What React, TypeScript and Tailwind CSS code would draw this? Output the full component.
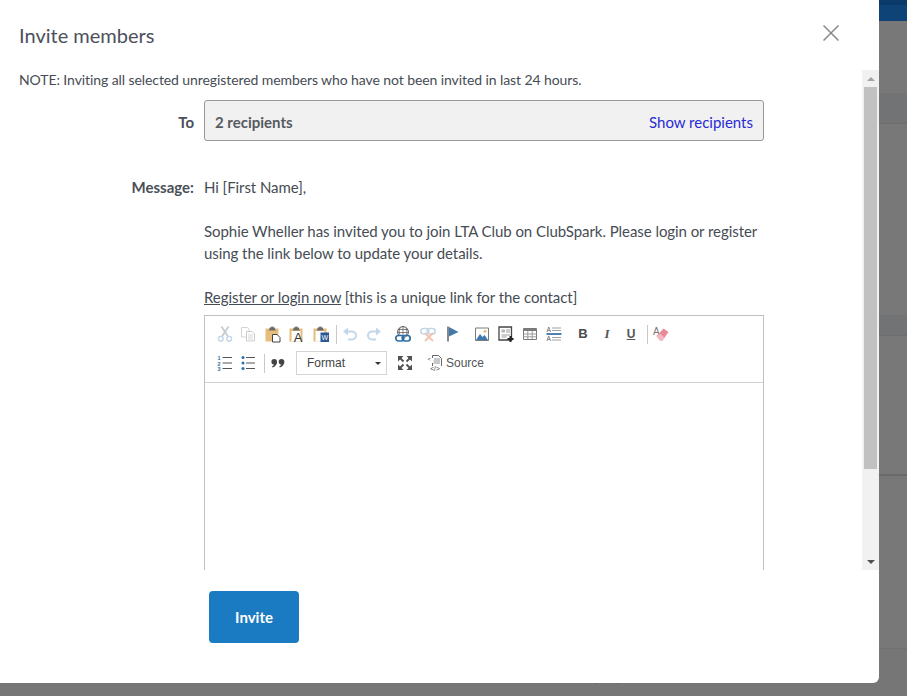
import type { ReactNode } from 'react';

const Tool = ({ className = '', children }: { className?: string; children: ReactNode }) => (
  <svg viewBox="0 0 16 16" className={`w-4 h-4 shrink-0 overflow-visible ${className}`}>
    {children}
  </svg>
);

const Sep = ({ className = '' }: { className?: string }) => (
  <div className={`w-px h-[19px] bg-[#c8c8c8] shrink-0 ${className}`} />
);

const Clipboard = () => (
  <>
    <path d="M0.500 2.500h13v13h-13z" fill="#e6bd7b" />
    <path d="M4.500 3V1.500H6L6.500 .5h1.500l.5 1H10V3l1 1.500H3.500z" fill="#6b6b6b" />
  </>
);

const Scrollbar = () => (
  <div className="w-[17px] h-full bg-[#f1f1f1] flex flex-col items-center shrink-0">
    <div className="h-[17px] w-full flex items-center justify-center">
      <div className="w-0 h-0 border-x-[4px] border-x-transparent border-b-[4px] border-b-[#a3a3a3]" />
    </div>
    <div className="h-[382px] w-[13px] bg-[#c1c1c1]" />
    <div className="flex-1" />
    <div className="h-[17px] w-full flex items-center justify-center">
      <div className="w-0 h-0 border-x-[4px] border-x-transparent border-t-[4px] border-t-[#505050]" />
    </div>
  </div>
);

const EditorToolbar = () => (
  <div className="h-[67px] border-b border-[#d1d1d1] pt-[10px] pl-[12px] font-['Liberation_Sans',sans-serif] text-[12px] text-[#555] tracking-normal">
    <div className="flex items-center h-4">
      {/* cut */}
      <Tool>
        <path d="M4.500 .5l6.500 10M11.500 .5L5 10.500" stroke="#c4ccd2" strokeWidth="1.800" fill="none" />
        <circle cx="3.800" cy="12.800" r="2.400" stroke="#c2d6e8" strokeWidth="1.400" fill="none" />
        <circle cx="12.200" cy="12.800" r="2.400" stroke="#c2d6e8" strokeWidth="1.400" fill="none" />
      </Tool>
      {/* copy */}
      <Tool className="ml-[7px]">
        <path d="M1.500 1.500h6l1.500 1.500v8H1.500z" fill="#fff" stroke="#d4d4d4" />
        <path d="M6.500 5.500h5.500l2.500 2.500v7h-8z" fill="#fff" stroke="#cdcdcd" />
        <path d="M8 9h5M8 11h5M8 13h5" stroke="#d0d8e0" />
      </Tool>
      {/* paste */}
      <Tool className="ml-[9px]">
        <Clipboard />
        <path d="M7.500 8.500h4.500l3 3v4.500H7.500z" fill="#fff" stroke="#444" />
      </Tool>
      {/* paste text */}
      <Tool className="ml-[8px]">
        <Clipboard />
        <path d="M2.500 5h9v10.500h-9z" fill="#fff" />
        <text x="9" y="15.500" fontSize="13" fontFamily="Liberation Sans" fill="#333" textAnchor="middle">A</text>
      </Tool>
      {/* paste from word */}
      <Tool className="ml-[8px]">
        <Clipboard />
        <path d="M2.500 5h9v10.500h-9z" fill="#fff" />
        <path d="M7.500 6.500h8.500v9.500H7.500z" fill="#2b5797" />
        <text x="11.700" y="14" fontSize="7" fontFamily="Liberation Sans" fill="#fff" textAnchor="middle">W</text>
      </Tool>
      <Sep className="ml-[7px]" />
      {/* undo */}
      <Tool className="ml-[5px]">
        <path d="M3 5.500h7a4 4 0 0 1 0 8H6" stroke="#c3d7e8" strokeWidth="2" fill="none" />
        <path d="M6 1.500v8L1 5.500z" fill="#c3d7e8" />
      </Tool>
      {/* redo */}
      <Tool className="ml-[8px]">
        <path d="M13 5.500H6a4 4 0 0 0 0 8h4" stroke="#c3d7e8" strokeWidth="2" fill="none" />
        <path d="M10 1.500v8l5-4z" fill="#c3d7e8" />
      </Tool>
      {/* link */}
      <Tool className="ml-[13px]">
        <circle cx="8" cy="6" r="5.400" fill="none" stroke="#555" />
        <path d="M8 .6V9M5 2c-1 2-1 5 0 7M11 2c1 2 1 5 0 7M3 3.500h10M2.700 6.500h10.600" stroke="#555" strokeWidth=".7" fill="none" />
        <rect x="0.800" y="9.500" width="8" height="5.500" rx="2.700" fill="#fff" stroke="#2d6ea8" strokeWidth="1.700" />
        <rect x="7.200" y="9.500" width="8" height="5.500" rx="2.700" fill="none" stroke="#2d6ea8" strokeWidth="1.700" />
      </Tool>
      {/* unlink */}
      <Tool className="ml-[9px]">
        <rect x="0.800" y="2.500" width="8" height="5.500" rx="2.700" fill="none" stroke="#c3d7e8" strokeWidth="1.700" />
        <rect x="7.200" y="2.500" width="8" height="5.500" rx="2.700" fill="none" stroke="#c3d7e8" strokeWidth="1.700" />
        <path d="M5 7l8 8M13 7l-8 8" stroke="#f3c3ae" strokeWidth="1.800" />
      </Tool>
      {/* anchor */}
      <Tool className="ml-[9px]">
        <path d="M3 .5v15" stroke="#6b6b6b" strokeWidth="1.600" />
        <path d="M4 1l9.500 5L4 10.500z" fill="#4479ae" />
      </Tool>
      {/* image */}
      <Tool className="ml-[13px]">
        <path d="M1.500 2h13v12.500h-13z" fill="#fff" stroke="#7b7b7b" />
        <circle cx="11" cy="5.300" r="1.400" fill="#efb961" />
        <path d="M2 14l4-6 2.500 3L10.500 9l3.500 5z" fill="#3f79ae" />
      </Tool>
      {/* templates */}
      <Tool className="ml-[8px]">
        <path d="M1 1h12.500v13H1z" fill="#fff" stroke="#444" strokeWidth="1.300" />
        <path d="M3.500 3.500h3.500v3h-3.500z" fill="#b5b5b5" />
        <path d="M8 4h4M8 6h4M3.500 9h8.500M3.500 11h5" stroke="#9a9a9a" />
        <path d="M12.500 10v6M9.500 13h6" stroke="#222" strokeWidth="2" />
      </Tool>
      {/* table */}
      <Tool className="ml-[8px]">
        <path d="M1.500 2.500h13v11h-13z" fill="#fff" stroke="#7a7a7a" />
        <path d="M1.500 3h13v2h-13z" fill="#7a7a7a" />
        <path d="M1.500 8h13M1.500 10.800h13M5.800 5v8M10.200 5v8" stroke="#9a9a9a" />
      </Tool>
      {/* styles block */}
      <Tool className="ml-[8px]">
        <text x="0.500" y="5.800" fontSize="6.500" fontFamily="Liberation Sans" fill="#555">A</text>
        <text x="0.500" y="15" fontSize="6.500" fontFamily="Liberation Sans" fill="#555">A</text>
        <path d="M6 2h9M6 4.500h9M6 11.500h9M6 14h9" stroke="#a0a0a0" />
        <path d="M0.500 8h15" stroke="#3d73a8" strokeWidth="1.800" />
      </Tool>
      <div className="w-4 ml-[13px] text-center font-bold text-[13px] leading-4 text-[#4a4a4a]">B</div>
      <div className="w-4 ml-[8px] text-center font-bold italic text-[13px] leading-4 text-[#555] font-['Liberation_Serif',serif]">I</div>
      <div className="w-4 ml-[8px] text-center font-bold text-[12px] leading-4 text-[#555] underline">U</div>
      <Sep className="ml-[8px]" />
      {/* remove format */}
      <Tool className="ml-[5px]">
        <text x="0" y="8.500" fontSize="10" fontFamily="Liberation Sans" fill="#777">A</text>
        <path d="M3.500 10l7-7.500 5 3.500-6 8.500H7z" fill="#e98a9a" />
        <path d="M3.500 10l3.500 4.500h2.500l2-2.800-4-4z" fill="#f4b8c3" />
      </Tool>
    </div>
    <div className="flex items-center h-6 mt-[9px]">
      {/* numbered list */}
      <Tool>
        <text x="0.500" y="5" fontSize="5.500" fontFamily="Liberation Sans" fontWeight="700" fill="#2d6ea8">1</text>
        <text x="0.500" y="10.500" fontSize="5.500" fontFamily="Liberation Sans" fontWeight="700" fill="#2d6ea8">2</text>
        <text x="0.500" y="15.800" fontSize="5.500" fontFamily="Liberation Sans" fontWeight="700" fill="#2d6ea8">3</text>
        <path d="M5.500 2.500H15M5.500 8H15M5.500 13.500H15" stroke="#555" />
      </Tool>
      {/* bulleted list */}
      <Tool className="ml-[7px]">
        <circle cx="3" cy="2.500" r="1.500" fill="#2d6ea8" />
        <circle cx="3" cy="8" r="1.500" fill="#2d6ea8" />
        <circle cx="3" cy="13.500" r="1.500" fill="#2d6ea8" />
        <path d="M6 2.500H15M6 8H15M6 13.500H15" stroke="#555" />
      </Tool>
      <Sep className="ml-[8px]" />
      {/* quote */}
      <Tool className="ml-[5px]">
        <circle cx="4.200" cy="6.800" r="2.800" fill="#444" />
        <path d="M7 6.800c0 3-2 5-4.500 5.700l-.5-1c1.500-.8 2.500-2 2.500-3.700z" fill="#444" />
        <circle cx="11.500" cy="6.800" r="2.800" fill="#444" />
        <path d="M14.300 6.800c0 3-2 5-4.500 5.700l-.5-1c1.500-.8 2.500-2 2.500-3.700z" fill="#444" />
      </Tool>
      <div className="w-[91px] h-6 ml-[10px] border border-[#d4d4d4] flex items-center justify-between pl-[10px] pr-[5px] text-[#444]">
        <span>Format</span>
        <div className="w-0 h-0 border-x-[3px] border-x-transparent border-t-[3px] border-t-[#333]" />
      </div>
      {/* maximize */}
      <Tool className="ml-[10px]">
        <path d="M1 1h5.500L1 6.500zM15 1v5.500L9.500 1zM1 15V9.500L6.500 15zM15 15H9.500L15 9.500z" fill="#505050" />
        <path d="M3 3l3.500 3.500M13 3L9.500 6.500M3 13l3.500-3.500M13 13L9.500 9.500" stroke="#505050" strokeWidth="1.800" />
      </Tool>
      {/* source */}
      <Tool className="ml-[14px]">
        <path d="M5.500 3V.5h6L14.500 3.500V11M5.500 8v3" fill="none" stroke="#555" strokeWidth=".9" />
        <path d="M7 4h6M6.500 6h6.500M6.500 8h6.500" stroke="#777" strokeWidth=".8" />
        <text x="0.500" y="6" fontSize="6" fontFamily="Liberation Sans" fill="#333">&lt;</text>
        <text x="8" y="15.800" fontSize="6.500" fontFamily="Liberation Sans" fill="#333" textAnchor="middle">&lt;/&gt;</text>
      </Tool>
      <span className="ml-[3px] text-[12px]">Source</span>
    </div>
  </div>
);

export default function App() {
  return (
    <div className="relative w-[907px] h-[696px] overflow-hidden bg-[#787878] font-['Lato',sans-serif]">
      {/* dimmed page behind the modal */}
      <div className="flex flex-col h-full">
        <div className="h-[21px] shrink-0 bg-[#0e4377] border-t-[5px] border-[#0b3a68]" />
        <div className="h-[72px] shrink-0" />
        <div className="h-[31px] shrink-0 bg-[#717375] border-b border-[#6d6d6d]" />
        <div className="h-[191px] shrink-0" />
        <div className="h-[21px] shrink-0 bg-[#717375] border-b border-[#6d6d6d]" />
        <div className="h-[140px] shrink-0 border-b-2 border-[#6a6a6a]" />
        <div className="h-[173px] shrink-0 border-b border-[#707070]" />
        <div className="flex-1 bg-[#767676] pt-[22px] text-[14px] leading-[14px] text-[#333] flex">
          <span className="ml-[136px] w-[160px]">1</span>
          <span className="w-[136px]">10</span>
          <span className="w-[146px]">16</span>
          <span className="w-[180px]">02/06/2022</span>
          <span>Male</span>
        </div>
      </div>

      <div className="absolute left-0 top-0 w-[879px] h-[683px] bg-white rounded-br-[6px] flex flex-col">
        <div className="relative h-[70px] shrink-0 pl-[19px] pt-[21px] text-[20px] leading-[28px] text-[#4c505b]">
          Invite members
          <svg viewBox="0 0 16 16" className="absolute left-[822.500px] top-[24.500px] w-4 h-4">
            <path d="M.5.5l15 15M15.500.5l-15 15" stroke="#888" strokeWidth="1.500" />
          </svg>
        </div>

        <div className="flex h-[500px] shrink-0">
          <div className="flex-1 overflow-hidden">
            <div className="pl-[19px] text-[14px] leading-[20px] tracking-[-0.087px] text-[#464c54]">
              NOTE: Inviting all selected unregistered members who have not been invited in last 24 hours.
            </div>
            <div className="flex items-center h-[41px] mt-[10px]">
              <div className="w-[194px] pt-[3px] text-right text-[15px] font-bold text-[#4a4f58]">To</div>
              <div className="w-[560px] h-[41px] ml-[10px] bg-[#f1f1f1] border border-[#999] rounded-[3px] flex items-center justify-between pt-[3px] pl-[10px] pr-[10px] text-[15px]">
                <span className="font-bold text-[#555a60]">2 recipients</span>
                <span className="text-[#2a2ad6]">Show recipients</span>
              </div>
            </div>
            <div className="flex mt-[35px]">
              <div className="w-[194px] text-right text-[15px] leading-[22px] font-bold text-[#4a4f58]">Message:</div>
              <div className="w-[560px] ml-[10px] text-[15px] leading-[22px] tracking-[-0.06px] text-[#464c54]">
                <p>Hi [First Name],</p>
                <p className="mt-[22px]">
                  Sophie Wheller has invited you to join LTA Club on ClubSpark. Please login or register using the link below to update your details.
                </p>
                <p className="mt-[22px]">
                  <span className="underline">Register or login now</span> [this is a unique link for the contact]
                </p>
                <div className="mt-[7px] h-[320px] border border-[#c0c0c0]">
                  <EditorToolbar />
                </div>
              </div>
            </div>
          </div>
          <Scrollbar />
        </div>

        <div className="pt-[21px] pl-[209px]">
          <button className="w-[90px] h-[52px] bg-[#1b7bc2] rounded-[4px] text-white text-[15px] font-bold">Invite</button>
        </div>
      </div>
    </div>
  );
}
